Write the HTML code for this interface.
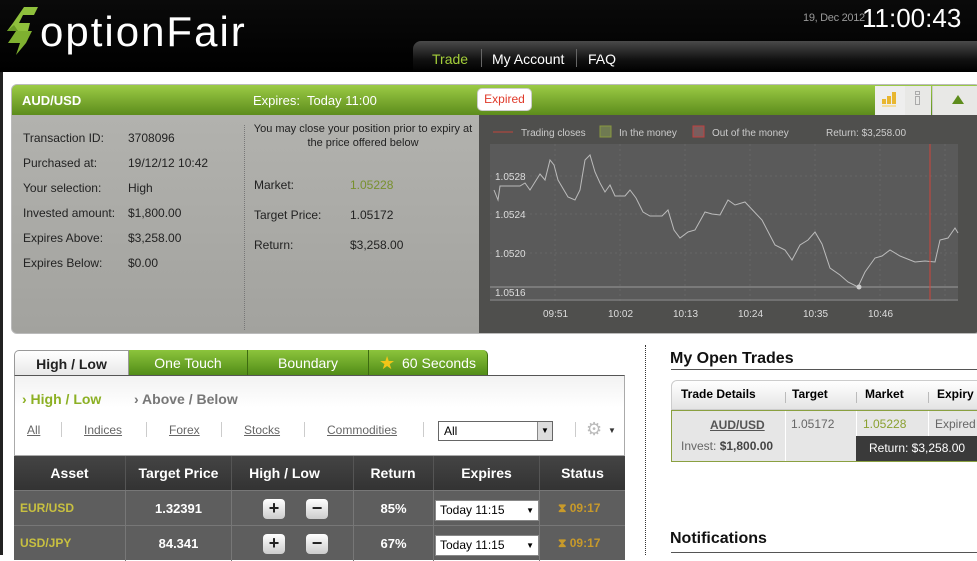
<!DOCTYPE html>
<html><head><meta charset="utf-8"><style>
*{margin:0;padding:0;box-sizing:border-box}
body{width:977px;height:555px;overflow:hidden;background:#fff;font-family:"Liberation Sans",Arial,sans-serif;position:relative;font-size:12px}
.a{position:absolute;white-space:nowrap}
#hdr{position:absolute;left:0;top:0;width:977px;height:72px;background:linear-gradient(#0a0a0a,#000)}
#nav{position:absolute;left:413px;top:41px;width:564px;height:31px;border-radius:8px 0 0 0;background:linear-gradient(#4a4a4a,#111 60%,#000)}
.nv{position:absolute;top:10px;font-size:14px;color:#fff}
.sep{position:absolute;top:8px;width:1px;height:18px;background:#666}
#panel{position:absolute;left:11px;top:84px;width:970px;height:250px;border:1px solid #bbb;border-radius:6px;overflow:hidden;background:#a8a8a5}
#ph{position:absolute;left:0;top:0;width:100%;height:30px;background:linear-gradient(#9bcb45,#5d8c1c)}
#det{position:absolute;left:0;top:30px;width:467px;height:220px;background:linear-gradient(#b2b2ae,#a2a29e)}
#chart{position:absolute;left:467px;top:30px;width:503px;height:220px;background:#4f4f4d}
.dl{position:absolute;font-size:12px;color:#222}
.tab{position:absolute;top:350px;height:26px;font-size:14px;color:#fff;text-align:center;line-height:26px;background:linear-gradient(#8cc43c,#4f8a16);border-right:1px solid #3d6b10}
.row{position:absolute;left:14px;width:611px;height:35px;background:#5e5e5e;border-top:1px solid #777}
.cell{position:absolute;top:0;height:35px;line-height:35px;font-weight:bold;font-size:13px;color:#fff;text-align:center}
.btn{position:absolute;top:8px;width:22px;height:20px;border-radius:4px;background:linear-gradient(#fff,#ccc);color:#222;font-weight:bold;font-size:18px;line-height:19px;text-align:center}
.sel{position:absolute;top:9px;left:420px;width:104px;height:21px;background:#fff;border:1px solid #888;color:#000;font-size:12px;line-height:19px;padding-left:4px;font-weight:normal;text-align:left}
.hg{position:absolute;left:544px;top:0;line-height:35px;font-size:12px;font-weight:bold;color:#c89a2a}
</style></head><body>
<div style="position:absolute;left:0;top:72px;width:3px;height:483px;background:#222"></div>
<div id="hdr">
<svg class="a" style="left:4px;top:5px" width="36" height="52" viewBox="0 0 36 52"><path d="M20 2 L34 2 L30 10 L19 10 L15 18 L26 18 L24 26 L12 26 L3 26 L9 18 Z" fill="#8fc03c"/><path d="M12 26 L28 26 L22 38 L12 50 L16 38 L4 38 Z" fill="#7fb030"/><path d="M3 26 L14 26 L10 20Z" fill="#6a9a25"/></svg>
<div class="a" style="left:40px;top:8px;font-size:42px;color:#fff;letter-spacing:2px">optionFair</div>
<div class="a" style="left:803px;top:12px;font-size:11px;color:#999;letter-spacing:-0.3px">19, Dec 2012</div>
<div class="a" style="left:862px;top:3px;font-size:26px;color:#fff">11:00:43</div>
<div id="nav">
<div class="nv" style="left:19px;color:#a4cf3a">Trade</div><div class="sep" style="left:68px"></div>
<div class="nv" style="left:79px">My Account</div><div class="sep" style="left:163px"></div>
<div class="nv" style="left:175px">FAQ</div>
</div></div>

<div id="panel">
<div id="ph">
<div class="a" style="left:10px;top:8px;color:#fff;font-weight:bold;font-size:13px">AUD/USD</div>
<div class="a" style="left:241px;top:8px;color:#fff;font-size:13px">Expires:&nbsp; Today 11:00</div>
<div class="a" style="left:465px;top:3px;width:55px;height:23px;border-radius:5px;background:#fff;border:1px solid #ccc;color:#e03a2a;font-size:12px;line-height:20px;text-align:center">Expired</div>
<div class="a" style="left:863px;top:1px;width:30px;height:29px;background:#eee"></div>
<svg class="a" style="left:869px;top:5px" width="16" height="18"><rect x="1" y="9" width="4" height="5" fill="#e8b630"/><rect x="6" y="6" width="4" height="8" fill="#e8b630"/><rect x="11" y="2" width="4" height="12" fill="#e8b630"/><rect x="1" y="15" width="14" height="2" fill="#f3dc9c"/></svg>
<div class="a" style="left:893px;top:1px;width:26px;height:29px;background:#e8e8e6"></div>
<svg class="a" style="left:902px;top:5px" width="8" height="20"><rect x="1.5" y="1.5" width="4" height="3" fill="none" stroke="#aaa"/><rect x="1.5" y="6.5" width="4" height="8" fill="none" stroke="#aaa"/></svg>
<div class="a" style="left:920px;top:1px;width:50px;height:29px;background:#e8e8e6;border-left:1px solid #ccc"></div>
<div class="a" style="left:940px;top:10px;width:0;height:0;border-left:6px solid transparent;border-right:6px solid transparent;border-bottom:9px solid #5d8c1c"></div>
</div>
<div id="det">
<div class="dl" style="left:11px;top:16px">Transaction ID:</div><div class="dl" style="left:116px;top:16px">3708096</div>
<div class="dl" style="left:11px;top:41px">Purchased at:</div><div class="dl" style="left:116px;top:41px">19/12/12 10:42</div>
<div class="dl" style="left:11px;top:66px">Your selection:</div><div class="dl" style="left:116px;top:66px">High</div>
<div class="dl" style="left:11px;top:91px">Invested amount:</div><div class="dl" style="left:116px;top:91px">$1,800.00</div>
<div class="dl" style="left:11px;top:116px">Expires Above:</div><div class="dl" style="left:116px;top:116px">$3,258.00</div>
<div class="dl" style="left:11px;top:141px">Expires Below:</div><div class="dl" style="left:116px;top:141px">$0.00</div>
<div class="a" style="left:232px;top:10px;height:205px;border-left:1px dotted #777"></div>
<div class="dl" style="left:236px;top:7px;width:230px;text-align:center;font-size:11px;line-height:14px;white-space:normal">You may close your position prior to expiry at the price offered below</div>
<div class="dl" style="left:242px;top:63px">Market:</div><div class="dl" style="left:338px;top:63px;color:#78902e">1.05228</div>
<div class="dl" style="left:242px;top:93px">Target Price:</div><div class="dl" style="left:338px;top:93px">1.05172</div>
<div class="dl" style="left:242px;top:123px">Return:</div><div class="dl" style="left:338px;top:123px">$3,258.00</div>
</div>
<div id="chart"></div>
</div>
<svg class="a" style="left:478px;top:114px" width="499" height="219">
<g font-family="Liberation Sans,Arial,sans-serif" font-size="10" fill="#ccc">
<line x1="15" y1="18" x2="35" y2="18" stroke="#c0443a"/><text x="43" y="22">Trading closes</text>
<rect x="122" y="12" width="11" height="11" fill="#6f7a52" stroke="#8a9a40"/><text x="141" y="22">In the money</text>
<rect x="215" y="12" width="11" height="11" fill="#7a5e5e" stroke="#c04040"/><text x="234" y="22">Out of the money</text>
<text x="348" y="22">Return: $3,258.00</text>
</g>
<rect x="12" y="30" width="468" height="157" fill="#5a5a5a"/>
<g stroke="#666" stroke-dasharray="2,3"><line x1="12" y1="62" x2="480" y2="62"/><line x1="12" y1="100" x2="480" y2="100"/><line x1="12" y1="139" x2="480" y2="139"/><line x1="77" y1="30" x2="77" y2="187"/><line x1="142" y1="30" x2="142" y2="187"/><line x1="207" y1="30" x2="207" y2="187"/><line x1="272" y1="30" x2="272" y2="187"/><line x1="337" y1="30" x2="337" y2="187"/><line x1="402" y1="30" x2="402" y2="187"/><line x1="467" y1="30" x2="467" y2="187"/></g>
<line x1="12" y1="173" x2="480" y2="173" stroke="#999"/>
<line x1="12" y1="186" x2="480" y2="186" stroke="#888"/>
<g font-family="Liberation Sans,Arial,sans-serif" font-size="10" fill="#ddd">
<text x="17" y="66">1.0528</text><text x="17" y="104">1.0524</text><text x="17" y="143">1.0520</text><text x="17" y="182">1.0516</text>
<text x="65" y="203">09:51</text><text x="130" y="203">10:02</text><text x="195" y="203">10:13</text><text x="260" y="203">10:24</text><text x="325" y="203">10:35</text><text x="390" y="203">10:46</text>
</g>
<polyline fill="none" stroke="#bbb" stroke-width="1" points="16,76 20,86 22,72 42,72 47,69 52,76 62,60 67,66 72,46 76,51 80,66 90,83 97,86 102,76 107,46 112,41 117,58 122,69 127,78 132,71 137,82 147,82 152,76 158,84 165,98 172,102 184,102 190,96 196,116 202,124 210,118 217,116 227,98 234,100 242,101 250,86 257,91 267,88 284,106 297,131 307,136 314,146 322,131 330,126 337,118 344,130 352,154 362,161 370,168 380,173 387,158 397,144 404,142 412,136 422,142 437,148 447,147 457,148 462,126 470,124 477,114 480,119"/>
<circle cx="381" cy="173" r="2.5" fill="#ccc"/>
<line x1="452" y1="30" x2="452" y2="186" stroke="#d0443a"/>
</svg>

<div class="a" style="left:14px;top:350px;width:115px;height:27px;background:linear-gradient(#fff,#e6e6e6);border:1px solid #999;border-bottom:none;border-radius:5px 0 0 0;text-align:center;line-height:26px;font-weight:bold;font-size:14px;color:#222">High / Low</div>
<div class="tab" style="left:129px;width:119px">One Touch</div>
<div class="tab" style="left:248px;width:121px">Boundary</div>
<div class="tab" style="left:369px;width:119px;border-radius:0 5px 0 0;padding-left:22px">60 Seconds</div>
<div class="a" style="left:379px;top:353px;font-size:18px;color:#f3c518">★</div>
<div class="a" style="left:14px;top:375px;width:611px;height:81px;border:1px solid #aaa;border-top:1px solid #555;background:linear-gradient(#f2f2f2,#fff 40%)"></div>
<div class="a" style="left:22px;top:391px;font-size:14px;font-weight:bold;color:#8cb024">› High / Low</div>
<div class="a" style="left:134px;top:391px;font-size:14px;font-weight:bold;color:#777">› Above / Below</div>
<div class="a" style="left:27px;top:423px;font-size:12px;color:#666;text-decoration:underline">All</div>
<div class="a" style="left:84px;top:423px;font-size:12px;color:#666;text-decoration:underline">Indices</div>
<div class="a" style="left:169px;top:423px;font-size:12px;color:#666;text-decoration:underline">Forex</div>
<div class="a" style="left:244px;top:423px;font-size:12px;color:#666;text-decoration:underline">Stocks</div>
<div class="a" style="left:327px;top:423px;font-size:12px;color:#666;text-decoration:underline">Commodities</div>
<div class="a" style="left:61px;top:422px;width:1px;height:15px;background:#ccc"></div>
<div class="a" style="left:146px;top:422px;width:1px;height:15px;background:#ccc"></div>
<div class="a" style="left:221px;top:422px;width:1px;height:15px;background:#ccc"></div>
<div class="a" style="left:304px;top:422px;width:1px;height:15px;background:#ccc"></div>
<div class="a" style="left:423px;top:422px;width:1px;height:15px;background:#ccc"></div>
<div class="a" style="left:575px;top:422px;width:1px;height:15px;background:#ccc"></div>
<div class="a" style="left:438px;top:421px;width:115px;height:20px;border:1px solid #666;background:#fff;font-size:12px;line-height:18px;padding-left:5px">All</div>
<div class="a" style="left:537px;top:422px;width:15px;height:18px;background:#ddd;border-left:1px solid #888;font-size:8px;text-align:center;line-height:18px">▼</div>
<div class="a" style="left:586px;top:419px;font-size:18px;color:#bbb">⚙</div>
<div class="a" style="left:608px;top:426px;font-size:8px;color:#333">▼</div>

<div class="a" style="left:14px;top:456px;width:611px;height:34px;background:linear-gradient(#444,#333)"></div>
<div class="cell" style="left:14px;top:456px;width:111px;height:34px;line-height:34px;font-size:14px">Asset</div>
<div class="cell" style="left:125px;top:456px;width:106px;height:34px;line-height:34px;font-size:14px;border-left:1px solid #555">Target Price</div>
<div class="cell" style="left:231px;top:456px;width:106px;height:34px;line-height:34px;font-size:14px;border-left:1px solid #555">High / Low</div>
<div class="cell" style="left:353px;top:456px;width:80px;height:34px;line-height:34px;font-size:14px">Return</div>
<div class="cell" style="left:433px;top:456px;width:106px;height:34px;line-height:34px;font-size:14px;border-left:1px solid #555">Expires</div>
<div class="cell" style="left:539px;top:456px;width:86px;height:34px;line-height:34px;font-size:14px;border-left:1px solid #555">Status</div>
<div class="a" style="left:353px;top:456px;width:1px;height:34px;background:#555"></div>

<div class="row" style="top:490px">
<div class="cell" style="left:6px;color:#c8c040;font-size:12px">EUR/USD</div>
<div class="cell" style="left:111px;width:106px;border-left:1px solid #777">1.32391</div>
<div class="cell" style="left:217px;width:122px;border-left:1px solid #777"></div>
<div class="btn" style="left:249px">+</div><div class="btn" style="left:292px">−</div>
<div class="cell" style="left:339px;width:80px;border-left:1px solid #777">85%</div>
<div class="cell" style="left:419px;width:106px;border-left:1px solid #777"></div>
<div class="sel" style="left:421px">Today 11:15 <span style="float:right;margin-right:4px;font-size:8px">▼</span></div>
<div class="cell" style="left:525px;width:86px;border-left:1px solid #777"></div>
<div class="hg">⧗ 09:17</div>
</div>
<div class="row" style="top:525px">
<div class="cell" style="left:6px;color:#c8c040;font-size:12px">USD/JPY</div>
<div class="cell" style="left:111px;width:106px;border-left:1px solid #777">84.341</div>
<div class="cell" style="left:217px;width:122px;border-left:1px solid #777"></div>
<div class="btn" style="left:249px">+</div><div class="btn" style="left:292px">−</div>
<div class="cell" style="left:339px;width:80px;border-left:1px solid #777">67%</div>
<div class="cell" style="left:419px;width:106px;border-left:1px solid #777"></div>
<div class="sel" style="left:421px">Today 11:15 <span style="float:right;margin-right:4px;font-size:8px">▼</span></div>
<div class="cell" style="left:525px;width:86px;border-left:1px solid #777"></div>
<div class="hg">⧗ 09:17</div>
</div>

<div class="a" style="left:645px;top:345px;height:210px;border-left:1px dotted #333"></div>
<div class="a" style="left:670px;top:350px;font-size:16px;font-weight:bold;color:#111">My Open Trades</div>
<div class="a" style="left:671px;top:369px;width:306px;height:1px;background:#555"></div>
<div class="a" style="left:671px;top:380px;width:320px;height:30px;border:1px solid #ccc;border-radius:6px 6px 0 0;background:linear-gradient(#fff,#e4e4e4)"></div>
<div class="a" style="left:681px;top:387px;font-size:12px;font-weight:bold">Trade Details</div>
<div class="a" style="left:792px;top:387px;font-size:12px;font-weight:bold">Target</div>
<div class="a" style="left:865px;top:387px;font-size:12px;font-weight:bold">Market</div>
<div class="a" style="left:937px;top:387px;font-size:12px;font-weight:bold">Expiry</div>
<div class="a" style="left:785px;top:392px;width:1px;height:11px;background:#bbb"></div>
<div class="a" style="left:856px;top:392px;width:1px;height:11px;background:#bbb"></div>
<div class="a" style="left:928px;top:392px;width:1px;height:11px;background:#bbb"></div>
<div class="a" style="left:671px;top:410px;width:310px;height:52px;background:#e6e6e6;border:1px solid #8aa040"></div>
<div class="a" style="left:785px;top:411px;width:1px;height:50px;background:#fff"></div>
<div class="a" style="left:856px;top:411px;width:1px;height:25px;background:#fff"></div>
<div class="a" style="left:928px;top:411px;width:1px;height:25px;background:#fff"></div>
<div class="a" style="left:710px;top:418px;font-size:12px;font-weight:bold;color:#555;text-decoration:underline">AUD/USD</div>
<div class="a" style="left:681px;top:439px;font-size:12px;color:#666">Invest: <b style="color:#444">$1,800.00</b></div>
<div class="a" style="left:791px;top:417px;font-size:12px;color:#666">1.05172</div>
<div class="a" style="left:863px;top:417px;font-size:12px;color:#8aa030">1.05228</div>
<div class="a" style="left:935px;top:417px;font-size:12px;color:#666">Expired</div>
<div class="a" style="left:856px;top:436px;width:125px;height:25px;background:#3a3a3a;color:#fff;font-size:12px;line-height:24px;padding-left:13px">Return: $3,258.00</div>
<div class="a" style="left:670px;top:530px;font-size:16px;font-weight:bold;color:#111">Notifications</div>
<div class="a" style="left:671px;top:552px;width:306px;height:1px;background:#555"></div>
</body></html>
